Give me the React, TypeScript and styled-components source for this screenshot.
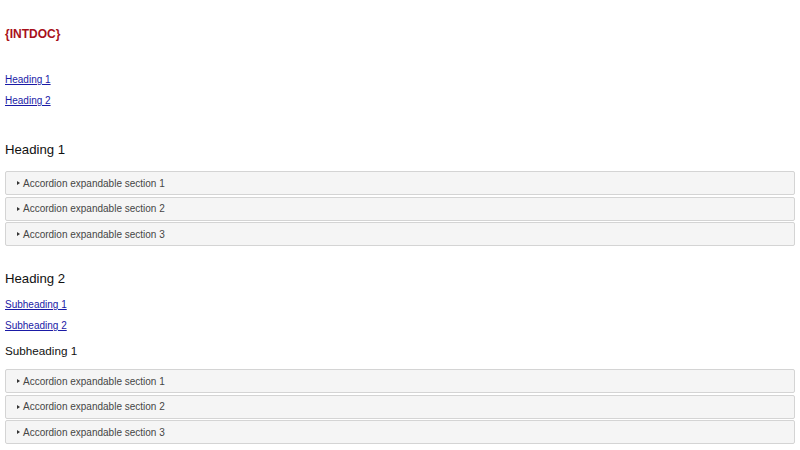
import React from 'react'
import styled, {createGlobalStyle} from 'styled-components'

const GlobalStyle = createGlobalStyle`
    body {
        margin: 0;
        background: #fff;
        font-family: "Liberation Sans", Arial, sans-serif;
    }
`

const Page = styled.div`
    padding: 28px 5px 0 5px;
    display: flex;
    flex-direction: column;
`

const Title = styled.div`
    font-size: 12px;
    line-height: 1.15;
    font-weight: 700;
    color: #a8101a;
    margin-bottom: 32px;
`

const NavLink = styled.a`
    display: block;
    width: fit-content;
    font-size: 10px;
    line-height: 1.15;
    color: #1a1aa6;
    text-decoration: underline;
    margin-bottom: 10px;
`

const Heading = styled.div<{top: number}>`
    font-size: 13.2px;
    line-height: 1.15;
    color: #111;
    margin-top: ${props => props.top}px;
`

const Subheading = styled.div`
    font-size: 11.7px;
    line-height: 1.15;
    color: #111;
    margin-top: 2.5px;
`

const AccordionList = styled.div<{top: number}>`
    display: flex;
    flex-direction: column;
    gap: 1.5px;
    margin-top: ${props => props.top}px;
`

const Section = styled.div`
    height: 24px;
    box-sizing: border-box;
    border: 1px solid #d4d4d4;
    border-radius: 2px;
    background: #f5f5f5;
    display: flex;
    align-items: center;
    padding-left: 11px;
    font-size: 10px;
    color: #454545;
`

const Arrow = styled.span`
    width: 0;
    height: 0;
    border-top: 2.5px solid transparent;
    border-bottom: 2.5px solid transparent;
    border-left: 3px solid #333;
    margin-right: 3px;
`

function Accordion({top}: {top: number}) {
    return (
        <AccordionList top={top}>
            {[1, 2, 3].map(n => (
                <Section key={n}>
                    <Arrow />
                    Accordion expandable section {n}
                </Section>
            ))}
        </AccordionList>
    )
}

function App() {
    return (
        <>
            <GlobalStyle />
            <Page>
                <Title>{'{INTDOC}'}</Title>
                <NavLink href="#h1">Heading 1</NavLink>
                <NavLink href="#h2">Heading 2</NavLink>
                <Heading top={25.6}>Heading 1</Heading>
                <Accordion top={13.5} />
                <Heading top={25}>Heading 2</Heading>
                <div style={{height: 12.3}} />
                <NavLink href="#s1">Subheading 1</NavLink>
                <NavLink href="#s2">Subheading 2</NavLink>
                <Subheading>Subheading 1</Subheading>
                <Accordion top={11.7} />
            </Page>
        </>
    )
}

export default App
